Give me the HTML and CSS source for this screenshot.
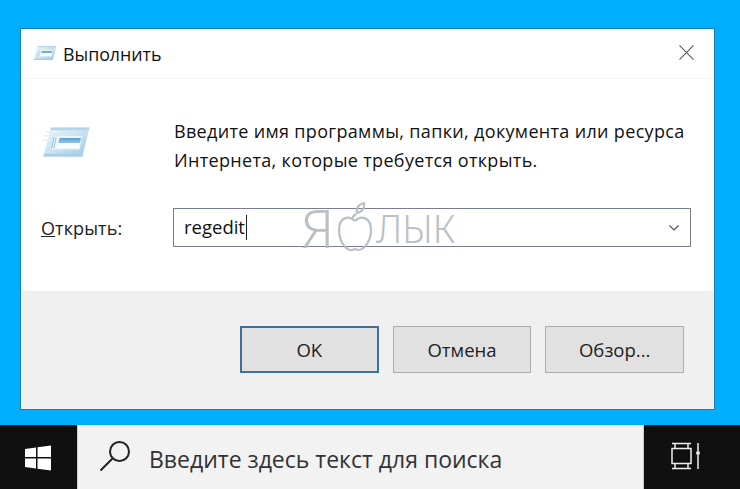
FILE: index.html
```html
<!DOCTYPE html>
<html lang="ru">
<head>
<meta charset="utf-8">
<title>Выполнить</title>
<link rel="stylesheet" href="styles.css">
</head>
<body>
<main class="desktop">
  <section class="dialog">
    <header class="titlebar">
      <svg class="run-icon-small" viewBox="0 0 70 45" aria-hidden="true">
        <use href="#run"/>
      </svg>
      <span class="title">Выполнить</span>
      <svg class="close" viewBox="0 0 16 16" aria-hidden="true"><path d="M.5.5l15 15M15.500.5l-15 15"/></svg>
    </header>
    <div class="divider"></div>
    <div class="content">
      <div class="intro">
        <svg class="run-icon" viewBox="0 0 70 45" aria-hidden="true">
          <defs>
            <linearGradient id="frame" x1="0" y1="0" x2="1" y2="1">
              <stop offset="0" stop-color="#eef6fb"/>
              <stop offset=".55" stop-color="#c6e0f0"/>
              <stop offset="1" stop-color="#9cc8e2"/>
            </linearGradient>
            <linearGradient id="screen" x1="0" y1="0" x2="0" y2="1">
              <stop offset="0" stop-color="#5aa2d2"/>
              <stop offset=".45" stop-color="#8fc2e2"/>
              <stop offset=".5" stop-color="#f4fafd"/>
              <stop offset="1" stop-color="#ffffff"/>
            </linearGradient>
            <g id="run">
              <path d="M14 2H68L58 43H3Z" fill="url(#frame)"/>
              <path d="M14 2H68L67 6H13Z" fill="#b4d6ea"/>
              <path d="M3 43H58L59 39H4Z" fill="#a8cee6"/>
              <path d="M20 14H58L54 33H15Z" fill="#eaf4fa"/>
              <path d="M26 17H56L53 31H23Z" fill="url(#screen)"/>
              <path d="M18 16l-3 15M21 16l-3 15" stroke="#7fb4d6" stroke-width="1" fill="none"/>
              <path d="M6 8H24M3 14H15M2 20H12" stroke="#e6f2f9" stroke-width="2" fill="none"/>
            </g>
          </defs>
          <use href="#run"/>
        </svg>
        <p class="message">Введите имя программы, папки, документа или ресурса<br>Интернета, которые требуется открыть.</p>
      </div>
      <div class="open-row">
        <label class="open-label"><u>О</u>ткрыть:</label>
        <div class="combo">
          <span class="value">regedit</span><span class="caret"></span>
          <svg class="chevron" viewBox="0 0 10 6" aria-hidden="true"><path d="M.5.5l4.500 4.500 4.500-4.500"/></svg>
          <div class="watermark">
            <span class="wm-big">Я</span>
            <svg class="apple" viewBox="0 0 36 50" aria-hidden="true">
              <path d="M18 19C12 13 2 15 2 28c0 11 7 21 13 20 1 0 2-1 3-1s2 1 3 1c7 0 13-10 13-20 0-13-10-15-16-9"/>
              <path d="M16 18c-1-2 0-4 3-6M20 11c-1-5 2-9 7-10 1 5-2 9-7 10z"/>
            </svg>
            <span class="wm-small">ЛЫК</span>
          </div>
        </div>
      </div>
    </div>
    <footer class="buttons">
      <button class="btn btn-default">OK</button>
      <button class="btn">Отмена</button>
      <button class="btn">Обзор...</button>
    </footer>
  </section>
  <nav class="taskbar">
    <div class="start">
      <svg class="win" viewBox="0 0 26 26" aria-hidden="true"><path d="M0 4l11-1.500V12H0zM12.500 2.300L26 .5V12H12.500zM0 13.500h11v10L0 22zM12.500 13.500H26V25.500L12.500 23.700z"/></svg>
    </div>
    <div class="search">
      <svg class="magnifier" viewBox="0 0 32 32" aria-hidden="true"><circle cx="20.500" cy="11.500" r="9.500"/><path d="M13.500 18.500L1.500 30.500"/></svg>
      <span class="search-text">Введите здесь текст для поиска</span>
    </div>
    <div class="tray">
      <svg class="taskview" viewBox="0 0 30 28" aria-hidden="true"><path d="M1 1.500h19M1 26.500h19M4 1.500v5M17 1.500v5M4 21.500v5M17 21.500v5M1 6.500h19v15H1zM27 1v8M27 13v14"/><circle cx="27" cy="11" r="1.200"/></svg>
    </div>
  </nav>
</main>
</body>
</html>
```
FILE: styles.css
```css
* { box-sizing: border-box; }
html, body { margin: 0; height: 100%; }
body {
  background: #00aeff;
  font-family: "Open Sans", "Noto Sans", sans-serif;
  color: #111;
  overflow: hidden;
}
.desktop {
  display: flex;
  flex-direction: column;
  width: 740px;
  height: 489px;
  padding-top: 28px;
}
.dialog {
  width: 695px;
  height: 382px;
  margin-left: 20px;
  background: #fff;
  border: 1px solid #1d7fb0;
  display: flex;
  flex-direction: column;
}
.titlebar {
  height: 49px;
  display: flex;
  align-items: center;
  padding: 0 20px 0 12px;
  flex: none;
}
.divider { height: 1px; background: #f6f6f6; flex: none; }
.run-icon-small { width: 24px; height: 16px; margin-top: -2px; }
.title { margin-left: 6px; font-size: 17.800px; line-height: 24px; flex: 1; }
.close { width: 15px; height: 15px; margin-top: -2px; }
.close path { stroke: #555; stroke-width: 1.100; fill: none; }
.content {
  flex: 1;
  display: flex;
  flex-direction: column;
  padding: 35px 23px 0 20px;
}
.intro { display: flex; align-items: flex-start; height: 64px; }
.run-icon { width: 50px; height: 32px; flex: none; margin-top: 12px; }
.message {
  margin: 0 0 0 83px;
  font-size: 18px;
  letter-spacing: .33px;
  line-height: 29px;
  white-space: nowrap;
  padding-top: 3px;
}
.open-row { display: flex; align-items: center; margin-top: 30px; }
.open-label { width: 132px; font-size: 18px; color: #222; letter-spacing: .1px; }
.combo {
  position: relative;
  flex: 1;
  height: 39px;
  border: 1px solid #7a7f90;
  display: flex;
  align-items: center;
  padding-left: 10px;
  background: #fff;
}
.value { font-size: 18.500px; line-height: 24px; margin-top: -2px; }
.caret { width: 1px; height: 25px; background: #222; margin-left: 1px; }
.chevron { position: absolute; right: 11px; top: 16px; width: 10px; height: 6px; }
.chevron path { fill: none; stroke: #555; stroke-width: 1.200; }
.watermark {
  position: absolute;
  left: 127px;
  top: -7px;
  display: flex;
  align-items: flex-end;
  height: 50px;
  color: #b4bac2;
  font-family: "Noto Sans", sans-serif;
  font-weight: 300;
  line-height: 50px;
  pointer-events: none;
  opacity: .9;
}
.wm-big { font-size: 54px; }
.wm-small { font-size: 38px; margin-bottom: -1px; }
.apple { width: 36px; height: 50px; margin: 0 3px 0 3px; flex: none; }
.apple path { fill: none; stroke: #b4bac2; stroke-width: 2.200; }
.buttons {
  height: 118px;
  background: #f0f0f0;
  display: flex;
  gap: 14px;
  padding: 35px 30px 0 219px;
  flex: none;
}
.btn {
  width: 139px;
  height: 47px;
  background: #e1e1e1;
  border: 1px solid #adadad;
  font: inherit;
  font-size: 18.500px;
  color: #222;
  padding: 0;
}
.btn-default { border: 2px solid #3e6f9f; }
.taskbar {
  margin-top: auto;
  height: 64px;
  display: flex;
  background: #101010;
  flex: none;
}
.start { width: 77px; display: flex; align-items: center; justify-content: center; }
.win { width: 26px; height: 26px; fill: #fff; margin: 2px 0 0 -2px; }
.search {
  width: 567px;
  background: #f2f2f2;
  display: flex;
  align-items: center;
  padding-left: 21px;
  border-left: 1px solid #ccc;
  border-right: 1px solid #ccc;
}
.magnifier { width: 32px; height: 32px; flex: none; fill: none; stroke: #222; stroke-width: 2; margin-top: -2px; }
.search-text { margin-left: 18px; font-size: 23px; color: #333; margin-top: 4px; }
.tray { flex: 1; display: flex; align-items: center; justify-content: center; }
.taskview { width: 30px; height: 28px; fill: #eee; stroke: #eee; stroke-width: 1.500; margin: -2px 0 0 -12px; }
.taskview path { fill: none; }
```
